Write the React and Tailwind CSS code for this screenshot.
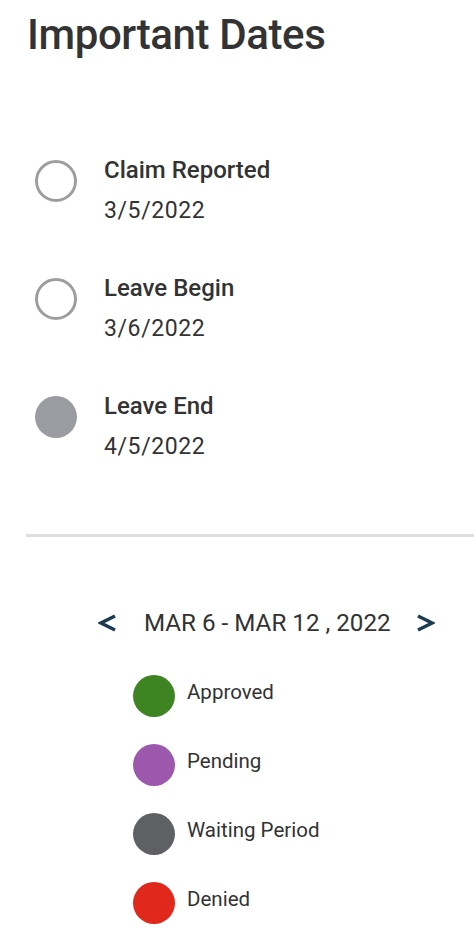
import React from "react";

const DATES = [
  { label: "Claim Reported", date: "3/5/2022", filled: false },
  { label: "Leave Begin", date: "3/6/2022", filled: false },
  { label: "Leave End", date: "4/5/2022", filled: true },
];

const LEGEND = [
  { label: "Approved", color: "bg-[#3f8423]" },
  { label: "Pending", color: "bg-[#9b58ad]" },
  { label: "Waiting Period", color: "bg-[#5e6063]" },
  { label: "Denied", color: "bg-[#e0281c]" },
];

function Chevron({ dir }) {
  return (
    <svg width="20" height="18" viewBox="0 0 20 18" fill="none" aria-hidden>
      {dir === "left" ? (
        <polyline points="17,2 3,9 17,16" stroke="#1d3b50" strokeWidth="3.4" strokeLinejoin="miter" />
      ) : (
        <polyline points="3,2 17,9 3,16" stroke="#1d3b50" strokeWidth="3.4" strokeLinejoin="miter" />
      )}
    </svg>
  );
}

export default function App() {
  return (
    <div className="min-h-screen bg-white text-[#333] font-['Roboto',sans-serif]">
      <h1 className="pl-[27px] pt-[9px] text-[42px] leading-[52px] font-medium tracking-[-0.4px]">
        Important Dates
      </h1>

      <div className="mt-[93px] pl-[35px] flex flex-col gap-[46px]">
        {DATES.map((d) => (
          <div key={d.label} className="flex items-start">
            <div
              className={`mt-[6px] w-[42px] h-[42px] rounded-full shrink-0 ${
                d.filled ? "bg-[#9a9ca1]" : "border-[3px] border-[#9e9e9e]"
              }`}
            />
            <div className="ml-[27px] flex flex-col">
              <p className="text-[24px] leading-[32px] font-medium">{d.label}</p>
              <p className="mt-[10px] text-[23px] leading-[30px] tracking-[0.6px]">{d.date}</p>
            </div>
          </div>
        ))}
      </div>

      <div className="mt-[72px] ml-[26px] h-[3px] bg-[#dedede]" />

      <div className="mt-[70px] pl-[98px] flex items-center h-[32px]">
        <Chevron dir="left" />
        <span className="ml-[26px] text-[24.2px] leading-[32px]">MAR 6 - MAR 12 , 2022</span>
        <span className="ml-[24px]">
          <Chevron dir="right" />
        </span>
      </div>

      <div className="mt-[22px] pl-[133px] flex flex-col">
        {LEGEND.map((l) => (
          <div key={l.label} className="flex items-center h-[69px]">
            <div className={`w-[42px] h-[42px] rounded-full shrink-0 ${l.color}`} />
            <span className="ml-[12px] -mt-[8px] text-[20.5px] leading-[28px]">{l.label}</span>
          </div>
        ))}
      </div>
    </div>
  );
}
